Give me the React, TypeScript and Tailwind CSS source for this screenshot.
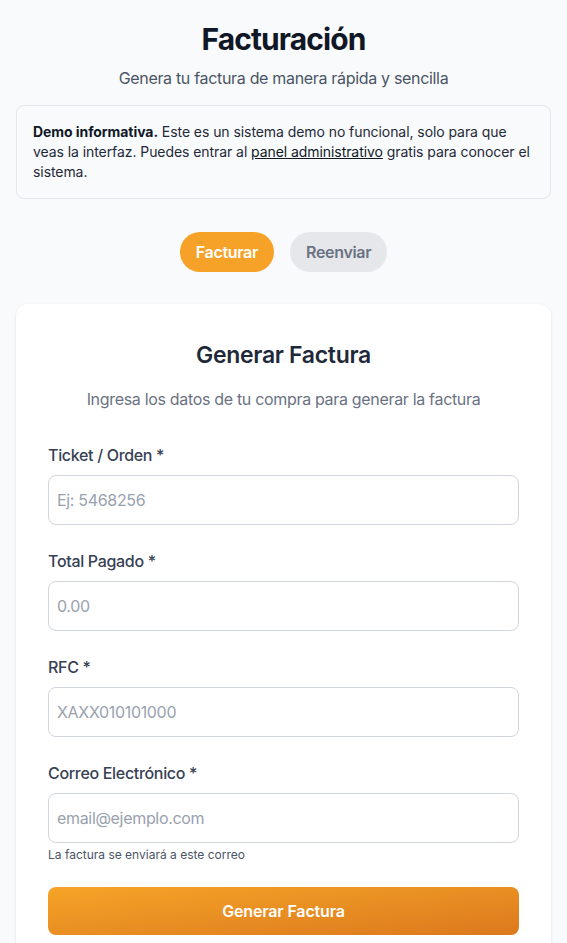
import React from "react";

function Field({ label, placeholder, helper }: { label: string; placeholder: string; helper?: string }) {
  return (
    <div>
      <label className="block text-base font-medium text-gray-700 mb-2">{label}</label>
      <input
        className="block w-full h-[50px] rounded-lg border border-gray-300 bg-white px-2 text-base tracking-[-0.02em] text-gray-800 placeholder:text-gray-400 outline-none"
        placeholder={placeholder}
      />
      {helper && <p className="mt-1 text-xs tracking-normal text-gray-600">{helper}</p>}
    </div>
  );
}

export default function App() {
  return (
    <div
      className="min-h-screen bg-gray-50 px-4 pt-[21px] pb-10 tracking-[-0.02em]"
      style={{ fontFamily: "Inter, 'Noto Sans', sans-serif" }}
    >
      <div className="text-center">
        <h1 className="text-3xl font-bold tracking-[-0.03em] text-gray-900 mb-[9px]">Facturación</h1>
        <p className="text-base text-gray-600">Genera tu factura de manera rápida y sencilla</p>
      </div>

      <div className="mt-[15px] rounded-lg border border-gray-200 bg-gray-50 p-4">
        <p className="text-sm leading-5 tracking-[-0.005em] text-gray-800">
          <strong className="font-bold text-gray-900">Demo informativa.</strong> Este es un sistema demo no funcional, solo para que
          <br />
          veas la interfaz. Puedes entrar al <a className="underline text-gray-900">panel administrativo</a> gratis para conocer el
          <br />
          sistema.
        </p>
      </div>

      <div className="mt-[33px] flex justify-center gap-4">
        <button className="h-10 rounded-full bg-[#f6a228] px-4 text-base font-semibold text-white">Facturar</button>
        <button className="h-10 rounded-full bg-gray-200 px-4 text-base font-semibold text-gray-500">Reenviar</button>
      </div>

      <div className="mt-8 rounded-xl bg-white px-8 pt-[35px] pb-8 shadow-sm">
        <h2 className="text-center text-[23px] leading-8 font-semibold text-gray-800 mb-4">Generar Factura</h2>
        <p className="text-center text-base text-gray-500 mb-8">Ingresa los datos de tu compra para generar la factura</p>
        <div className="flex flex-col gap-6">
          <Field label="Ticket / Orden *" placeholder="Ej: 5468256" />
          <Field label="Total Pagado *" placeholder="0.00" />
          <Field label="RFC *" placeholder="XAXX010101000" />
          <Field label="Correo Electrónico *" placeholder="email@ejemplo.com" helper="La factura se enviará a este correo" />
          <button className="h-12 w-full rounded-lg bg-linear-to-br from-[#f6a428] to-[#db791d] text-base font-semibold tracking-[-0.01em] text-white">
            Generar Factura
          </button>
        </div>
      </div>
    </div>
  );
}
